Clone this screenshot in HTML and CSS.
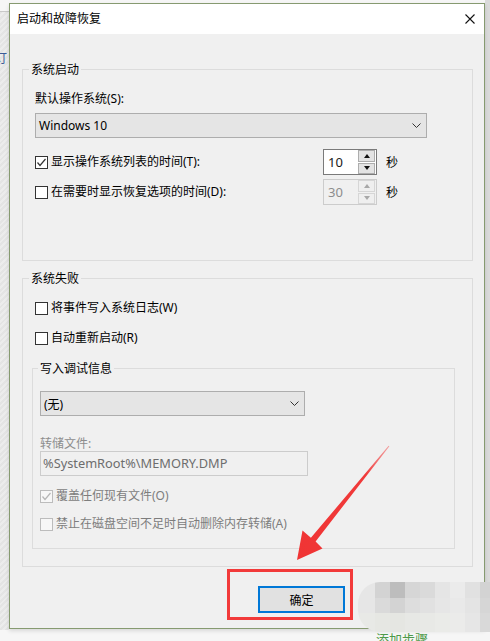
FILE: index.html
```html
<!DOCTYPE html>
<html lang="zh-CN">
<head>
<meta charset="utf-8">
<title>启动和故障恢复</title>
<link rel="stylesheet" href="styles.css">
</head>
<body>
<div class="desk">
  <div class="strip-left"></div>
  <div class="strip-right"></div>
  <span class="bg-left-text">订</span>

  <div class="dialog">
    <div class="titlebar">
      <span class="title">启动和故障恢复</span>
      <svg class="close" width="10" height="10" viewBox="0 0 10 10"><path d="M0.5 0.5 L9.5 9.5 M9.5 0.5 L0.5 9.5" stroke="#111" stroke-width="1.1" fill="none"/></svg>
    </div>
    <div class="content">
      <div class="group g1">
        <div class="legend">系统启动</div>
        <div class="label lbl-os">默认操作系统(S):</div>
        <div class="select sel-os">
          <span>Windows 10</span>
          <svg class="chev" width="9" height="5" viewBox="0 0 9 5"><polyline points="0.5,0.5 4.5,4.5 8.5,0.5" stroke="#333" fill="none"/></svg>
        </div>
        <div class="timerow tr1">
          <label class="check">
            <span class="box"><svg width="11" height="11" viewBox="0 0 11 11"><polyline points="1.5,5.5 4,8.5 9.5,2" stroke="#333" stroke-width="1.2" fill="none"/></svg></span>
            <span>显示操作系统列表的时间(T):</span>
          </label>
          <div class="spin">
            <span class="val">10</span>
            <span class="btns"><span class="btn"><i class="up"></i></span><span class="btn"><i class="down"></i></span></span>
          </div>
          <span class="unit">秒</span>
        </div>
        <div class="timerow tr2">
          <label class="check">
            <span class="box"></span>
            <span>在需要时显示恢复选项的时间(D):</span>
          </label>
          <div class="spin disabled">
            <span class="val">30</span>
            <span class="btns"><span class="btn"><i class="up"></i></span><span class="btn"><i class="down"></i></span></span>
          </div>
          <span class="unit">秒</span>
        </div>
      </div>

      <div class="group g2">
        <div class="legend">系统失败</div>
        <label class="check row cb-w">
          <span class="box"></span>
          <span>将事件写入系统日志(W)</span>
        </label>
        <label class="check row cb-r">
          <span class="box"></span>
          <span>自动重新启动(R)</span>
        </label>
        <div class="group g3">
          <div class="legend lg3">写入调试信息</div>
          <div class="select sel-dbg">
            <span>(无)</span>
            <svg class="chev" width="9" height="5" viewBox="0 0 9 5"><polyline points="0.5,0.5 4.5,4.5 8.5,0.5" stroke="#333" fill="none"/></svg>
          </div>
          <div class="label dim lbl-dump">转储文件:</div>
          <div class="textbox">%SystemRoot%\MEMORY.DMP</div>
          <label class="check row dis cb-o">
            <span class="box"><svg width="11" height="11" viewBox="0 0 11 11"><polyline points="1.5,5.5 4,8.5 9.5,2" stroke="#b5b5b5" stroke-width="1.2" fill="none"/></svg></span>
            <span>覆盖任何现有文件(O)</span>
          </label>
          <label class="check row dis cb-a">
            <span class="box"></span>
            <span>禁止在磁盘空间不足时自动删除内存转储(A)</span>
          </label>
        </div>
      </div>

      <div class="footer">
        <button class="ok" type="button">确定</button>
      </div>
    </div>
  </div>

  <div class="mosaic">
    <i style="background:#e6e6e6"></i><i style="background:#d3d3d3"></i><i style="background:#bdbdbd"></i><i style="background:#d6d6d6"></i><i style="background:#dadada"></i><i style="background:#e5e5e5"></i><i style="background:#ebebeb"></i><i style="background:#e1e1e1"></i><i style="background:#d3d3d3"></i>
    <i style="background:#e6e6e6"></i><i style="background:#dadada"></i><i style="background:#d3d3d3"></i><i style="background:#dddddd"></i><i style="background:#e1e1e1"></i><i style="background:#e6e6e6"></i><i style="background:#e9e9e9"></i><i style="background:#e4e4e4"></i><i style="background:#d6d6d6"></i>
    <i style="background:#e8e9e6"></i><i style="background:#e6e7e3"></i><i style="background:#e5e6e2"></i><i style="background:#e7e8e5"></i><i style="background:#e8e9e6"></i><i style="background:#eaebe8"></i><i style="background:#ebebea"></i><i style="background:#e6e6e6"></i><i style="background:#d9d9d9"></i>
  </div>
  <span class="bg-green">添加步骤</span>

  <div class="redbox"></div>
  <svg class="arrow" width="490" height="641" viewBox="0 0 490 641">
    <defs>
      <linearGradient id="ag" x1="389" y1="446" x2="297" y2="560" gradientUnits="userSpaceOnUse">
        <stop offset="0" stop-color="#f36a6a" stop-opacity="0.6"/>
        <stop offset="0.25" stop-color="#f03a3a"/>
        <stop offset="1" stop-color="#f03434"/>
      </linearGradient>
    </defs>
    <polygon fill="url(#ag)" points="389.4,446.3 315.6,541.5 322.5,548.5 297,560 302.5,530.5 310.9,537.8 388.6,445.7"/>
  </svg>
</div>
</body>
</html>
```

FILE: styles.css
```css
html, body {
  margin: 0;
  padding: 0;
}

body {
  font-family: "Noto Sans", "Noto Sans CJK SC", sans-serif;
  font-size: 12px;
  color: #000;
}

.desk {
  position: relative;
  width: 490px;
  height: 641px;
  overflow: hidden;
  box-sizing: border-box;
  padding: 3px 0 0 9px;
  background: #f6f6f6;
}

.strip-left {
  position: absolute;
  left: 0;
  top: 11px;
  width: 9px;
  height: 618px;
  background: repeating-linear-gradient(135deg, #e4e4e4 0 2px, #ececec 2px 4px);
  border-top: 1px solid #c9c9c9;
}

.strip-right {
  position: absolute;
  right: 0;
  top: 0;
  width: 5px;
  height: 630px;
  background: #dadada;
}

.bg-left-text {
  position: absolute;
  left: -5px;
  top: 49px;
  font-size: 12px;
  color: #3b5b98;
}

.dialog {
  position: relative;
  width: 476px;
  height: 626px;
  box-sizing: border-box;
  border: 1px solid #869a70;
  background: #f0f0f0;
  box-shadow: 0 2px 4px rgba(0, 0, 0, 0.12);
}

.titlebar {
  height: 30px;
  background: #fff;
  display: flex;
  align-items: center;
  justify-content: space-between;
  padding: 0 9px 0 7px;
}

.title {
  line-height: 30px;
  color: #000;
}

.close {
  display: block;
}

.content {
  display: flow-root;
}

.group {
  border: 1px solid #dcdcdc;
  box-sizing: border-box;
}

.legend {
  width: fit-content;
  margin: -8px 0 0 -6px;
  padding: 0 2px;
  background: #f0f0f0;
  line-height: 16px;
}

.g1 {
  margin: 35px 11px 0 12px;
  height: 192px;
  padding: 0 12px;
}

.label {
  line-height: 16px;
}

.lbl-os {
  margin-top: 13px;
}

.select {
  height: 25px;
  box-sizing: border-box;
  border: 1px solid #adadad;
  background: #e5e5e5;
  display: flex;
  align-items: center;
  justify-content: space-between;
  padding: 0 5px 0 3px;
}

.sel-os {
  margin-top: 6px;
  width: 392px;
}

.chev {
  display: block;
}

.timerow {
  display: grid;
  grid-template-columns: 288px 54px auto;
  align-items: center;
  height: 26px;
}

.tr1 {
  margin-top: 11px;
}

.tr2 {
  margin-top: 4px;
}

.check {
  display: flex;
  align-items: center;
  gap: 3px;
  line-height: 16px;
}

.box {
  width: 13px;
  height: 13px;
  box-sizing: border-box;
  border: 1px solid #333;
  background: #fff;
  display: flex;
  align-items: center;
  justify-content: center;
  flex: none;
}

.box svg {
  display: block;
}

.check.dis {
  color: #7d7d7d;
}

.check.dis .box {
  border-color: #bcbcbc;
  background: #f7f7f7;
}

.spin {
  display: flex;
  width: 54px;
  height: 26px;
  box-sizing: border-box;
  border: 1px solid #7a7a7a;
  background: #fff;
}

.spin .val {
  flex: 1;
  padding-left: 4px;
  line-height: 24px;
  font-size: 13px;
  color: #1a1a1a;
}

.spin .btns {
  width: 17px;
  display: flex;
  flex-direction: column;
  gap: 1px;
  padding: 0 1px 0 0;
}

.spin .btn {
  flex: 1;
  border: 1px solid #adadad;
  background: #e3e3e3;
  display: flex;
  align-items: center;
  justify-content: center;
}

.spin .up {
  width: 0;
  height: 0;
  border-left: 3px solid transparent;
  border-right: 3px solid transparent;
  border-bottom: 4px solid #111;
}

.spin .down {
  width: 0;
  height: 0;
  border-left: 3px solid transparent;
  border-right: 3px solid transparent;
  border-top: 4px solid #111;
}

.spin.disabled {
  border-color: #cccccc;
  background: #f0f0f0;
}

.spin.disabled .val {
  color: #8d8d8d;
}

.spin.disabled .btn {
  border-color: #d6d6d6;
  background: #efefef;
}

.spin.disabled .up {
  border-bottom-color: #a8a8a8;
}

.spin.disabled .down {
  border-top-color: #a8a8a8;
}

.unit {
  margin-left: 9px;
}

.g2 {
  margin: 17px 11px 0 12px;
  height: 289px;
  padding: 0 12px;
}

.cb-w {
  margin-top: 13px;
}

.cb-r {
  margin-top: 14px;
}

.g3 {
  margin: 22px 0 0 -3px;
  width: 423px;
  height: 181px;
  padding: 0 7px;
}

.lg3 {
  margin-left: -2px;
}

.sel-dbg {
  margin-top: 14px;
  width: 265px;
}

.dim {
  color: #8d8d8d;
}

.lbl-dump {
  margin-top: 21px;
  line-height: 14px;
}

.textbox {
  width: 268px;
  height: 25px;
  box-sizing: border-box;
  border: 1px solid #cccccc;
  background: #f0f0f0;
  color: #6d6d6d;
  line-height: 23px;
  padding-left: 2px;
  font-size: 12.8px;
}

.cb-o {
  margin-top: 12px;
}

.cb-a {
  margin-top: 12px;
}

.footer {
  margin-top: 19px;
  padding-left: 248px;
}

.ok {
  display: block;
  width: 87px;
  height: 27px;
  box-sizing: border-box;
  border: 2px solid #0078d7;
  background: #e1e1e1;
  font-family: inherit;
  font-size: 12px;
  color: #000;
  padding: 0;
}

.mosaic {
  position: absolute;
  left: 358px;
  top: 582px;
  width: 132px;
  height: 50px;
  display: grid;
  grid-template-columns: 17px repeat(7, 15px) 10px;
  grid-template-rows: 16px 15px 19px;
  border-radius: 22px 0 0 22px;
  overflow: hidden;
}

.mosaic i {
  display: block;
}

.bg-green {
  position: absolute;
  left: 376px;
  top: 629px;
  font-size: 13px;
  color: #4f9a4a;
}

.redbox {
  position: absolute;
  left: 227px;
  top: 569px;
  width: 126px;
  height: 51px;
  box-sizing: border-box;
  border: 3px solid #f23a3a;
}

.arrow {
  position: absolute;
  left: 0;
  top: 0;
  pointer-events: none;
}
```
